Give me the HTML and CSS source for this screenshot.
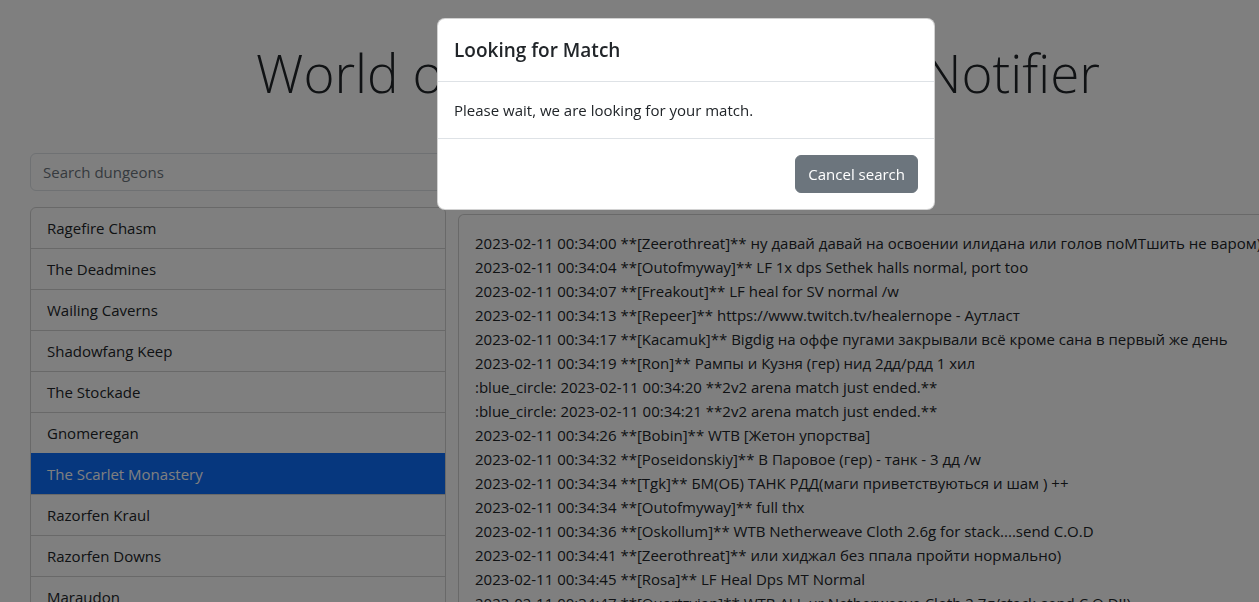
FILE: index.html
```html
<!DOCTYPE html>
<html lang="en">
<head>
<meta charset="utf-8">
<title>World of Warcraft Dungeon Notifier</title>
<link rel="stylesheet" href="styles.css">
</head>
<body>
<div class="page">
  <h1 class="display">World of Warcraft Dungeon Notifier</h1>
  <div class="layout">
    <div class="col-side">
      <input class="search" type="text" placeholder="Search dungeons">
      <ul class="list">
        <li class="item">Ragefire Chasm</li>
        <li class="item">The Deadmines</li>
        <li class="item">Wailing Caverns</li>
        <li class="item">Shadowfang Keep</li>
        <li class="item">The Stockade</li>
        <li class="item">Gnomeregan</li>
        <li class="item active">The Scarlet Monastery</li>
        <li class="item">Razorfen Kraul</li>
        <li class="item">Razorfen Downs</li>
        <li class="item">Maraudon</li>
        <li class="item">Uldaman</li>
      </ul>
    </div>
    <div class="col-main">
      <div class="log">
        <div class="log-body">
          <div class="line">2023-02-11 00:34:00 **[Zeerothreat]** ну давай давай на освоении илидана или голов поМТшить не варом)</div>
          <div class="line">2023-02-11 00:34:04 **[Outofmyway]** LF 1x dps Sethek halls normal, port too</div>
          <div class="line">2023-02-11 00:34:07 **[Freakout]** LF heal for SV normal /w</div>
          <div class="line">2023-02-11 00:34:13 **[Repeer]** https://www.twitch.tv/healernope - Аутласт</div>
          <div class="line">2023-02-11 00:34:17 **[Kacamuk]** Bigdig на оффе пугами закрывали всё кроме сана в первый же день</div>
          <div class="line">2023-02-11 00:34:19 **[Ron]** Рампы и Кузня (гер) нид 2дд/рдд 1 хил</div>
          <div class="line">:blue_circle: 2023-02-11 00:34:20 **2v2 arena match just ended.**</div>
          <div class="line">:blue_circle: 2023-02-11 00:34:21 **2v2 arena match just ended.**</div>
          <div class="line">2023-02-11 00:34:26 **[Bobin]** WTB [Жетон упорства]</div>
          <div class="line">2023-02-11 00:34:32 **[Poseidonskiy]** В Паровое (гер) - танк - 3 дд /w</div>
          <div class="line">2023-02-11 00:34:34 **[Tgk]** БМ(ОБ) ТАНК РДД(маги приветствуються и шам ) ++</div>
          <div class="line">2023-02-11 00:34:34 **[Outofmyway]** full thx</div>
          <div class="line">2023-02-11 00:34:36 **[Oskollum]** WTB Netherweave Cloth 2.6g for stack....send C.O.D</div>
          <div class="line">2023-02-11 00:34:41 **[Zeerothreat]** или хиджал без ппала пройти нормально)</div>
          <div class="line">2023-02-11 00:34:45 **[Rosa]** LF Heal Dps MT Normal</div>
          <div class="line">2023-02-11 00:34:47 **[Quartzvian]** WTB ALL ur Netherweave Cloth 2.7g/stack-send C.O.D!!)</div>
          <div class="line">2023-02-11 00:34:49 **[Ron]** Рампы и Кузня (гер) нид 1 хил</div>
        </div>
      </div>
    </div>
  </div>
</div>

<div class="backdrop"></div>

<div class="modal">
  <div class="modal-header">
    <h5 class="modal-title">Looking for Match</h5>
  </div>
  <div class="modal-body">Please wait, we are looking for your match.</div>
  <div class="modal-footer">
    <button class="btn-secondary" type="button">Cancel search</button>
  </div>
</div>
</body>
</html>
```
FILE: styles.css
```css
* { box-sizing: border-box; }

html, body {
  margin: 0;
  padding: 0;
  background: #fff;
  overflow: hidden;
}

body {
  font-family: "Open Sans", "Noto Sans", sans-serif;
  font-size: 15px;
  line-height: 24px;
  color: #212529;
  height: 602px;
}

.page {
  width: 1320px;
  margin-left: 18px;
}

.display {
  margin: 0;
  padding-top: 41px;
  height: 153px;
  font-family: "Open Sans", sans-serif;
  font-weight: 300;
  font-size: 53px;
  line-height: 1.2;
  text-align: center;
  color: #212529;
}

.layout {
  display: flex;
}

.col-side {
  width: 440px;
  padding: 0 12px;
  flex: none;
}

.col-main {
  width: 868px;
  padding-top: 61px;
  flex: none;
}

.search {
  display: block;
  width: 100%;
  height: 38px;
  padding: 6px 12px;
  font: inherit;
  color: #212529;
  border: 1px solid #dee2e6;
  border-radius: 6px;
  background: #fff;
  margin: 0 0 16px;
}

.search::placeholder { color: #6c757d; }

.list {
  list-style: none;
  margin: 0;
  padding: 0;
  border: 1px solid rgba(0,0,0,.175);
  border-radius: 6px;
  overflow: hidden;
}

.item {
  padding: 8px 16px;
  line-height: 24px;
  border-top: 1px solid rgba(0,0,0,.175);
}

.item:first-child { border-top: 0; }

.item.active {
  background: #0d6efd;
  color: #fff;
  border-top-color: #0d6efd;
}

.log {
  border: 1px solid rgba(0,0,0,.175);
  border-radius: 6px;
  background: #fff;
}

.log-body {
  padding: 16px;
  white-space: nowrap;
}

.line {
  line-height: 24px;
}

.backdrop {
  position: fixed;
  inset: 0;
  background: #000;
  opacity: .5;
}

.modal {
  position: fixed;
  top: 18px;
  left: 437px;
  width: 498px;
  background: #fff;
  border: 1px solid rgba(0,0,0,.175);
  border-radius: 8px;
  overflow: hidden;
}

.modal-header {
  padding: 16px;
  border-bottom: 1px solid #dee2e6;
}

.modal-title {
  margin: 0;
  font-size: 19px;
  font-weight: 600;
  line-height: 30px;
}

.modal-body {
  padding: 16px;
  line-height: 24px;
}

.modal-footer {
  display: flex;
  justify-content: flex-end;
  padding: 12px;
  border-top: 1px solid #dee2e6;
}

.btn-secondary {
  margin: 4px;
  height: 38px;
  padding: 6px 12px;
  font: inherit;
  color: #fff;
  background: #6c757d;
  border: 1px solid #6c757d;
  border-radius: 6px;
}
```
